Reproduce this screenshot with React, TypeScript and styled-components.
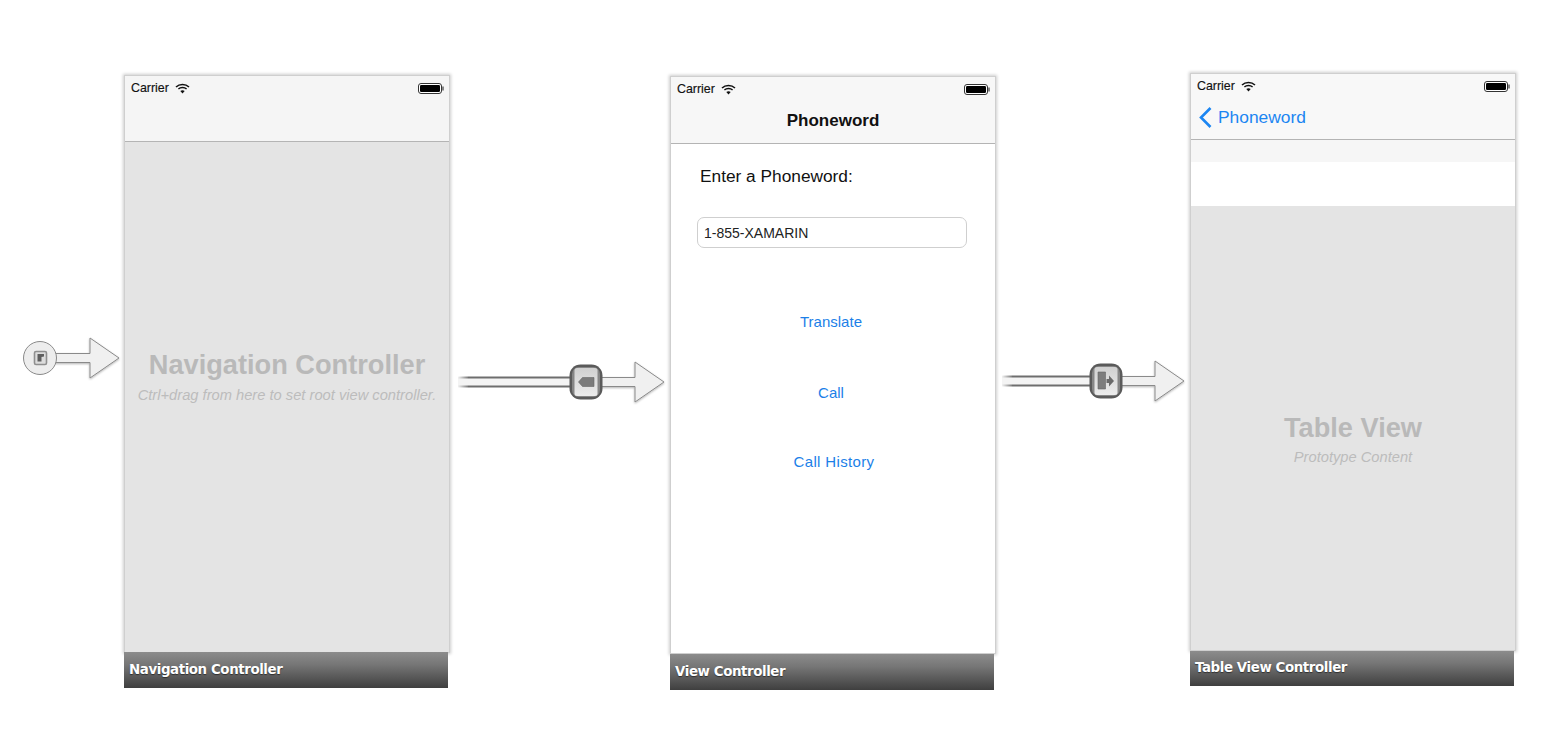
import React from "react";
import styled, { createGlobalStyle } from "styled-components";

const Global = createGlobalStyle`
  html, body { margin: 0; padding: 0; background: #fff; }
  body { font-family: "Liberation Sans", Arial, sans-serif; }
`;

const Canvas = styled.div`
  position: relative;
  width: 1556px;
  height: 752px;
  overflow: hidden;
  background: #fff;
`;

const SceneWrap = styled.section<{ $x: number; $y: number }>`
  position: absolute;
  left: ${(p) => p.$x}px;
  top: ${(p) => p.$y}px;
  width: 326px;
  display: flex;
  flex-direction: column;
`;

const Screen = styled.div`
  width: 324px;
  height: 576px;
  margin-left: 1px;
  display: flex;
  flex-direction: column;
  background: #fff;
  box-shadow: 0 0 0 1px #cfcfcf, 0 0 3px 2px rgba(0, 0, 0, 0.2);
`;

const Head = styled.header<{ $h: number; $bg: string }>`
  height: ${(p) => p.$h}px;
  flex: none;
  background: ${(p) => p.$bg};
  border-bottom: 1px solid #b4b4b4;
  display: flex;
  flex-direction: column;
`;

const StatusBar = styled.div`
  height: 24px;
  flex: none;
  padding: 0 5px 0 6px;
  display: flex;
  align-items: center;
  font-size: 12.4px;
  color: #111;
  -webkit-text-stroke: 0.15px #111;
`;

const Carrier = styled.span`
  margin-right: 6px;
`;

const Spacer = styled.span`
  flex: 1;
`;

const NavRow = styled.div`
  flex: 1;
  display: flex;
  align-items: center;
  padding-bottom: 2px;
`;

const NavTitle = styled.div`
  flex: 1;
  text-align: center;
  font-size: 17px;
  font-weight: 700;
  color: #111;
`;

const BackLink = styled.div`
  display: flex;
  align-items: center;
  padding-left: 8px;
  gap: 6px;
  font-size: 17.4px;
  color: #1c86f2;
`;

const GrayBody = styled.div<{ $top: number }>`
  flex: 1;
  background: #e4e4e4;
  display: flex;
  flex-direction: column;
  align-items: center;
  padding-top: ${(p) => p.$top}px;
`;

const BigHint = styled.div`
  font-size: 27.2px;
  font-weight: 700;
  line-height: 32px;
  color: #b9b9b9;
`;

const SmallHint = styled.div<{ $mt: number }>`
  font-size: 14.7px;
  font-style: italic;
  line-height: 16px;
  margin-top: ${(p) => p.$mt}px;
  color: #bcbcbc;
`;

const ViewBody = styled.div`
  flex: 1;
  display: flex;
  flex-direction: column;
  padding: 22px 28px 0 26px;
`;

const Prompt = styled.div`
  font-size: 17.3px;
  line-height: 20px;
  color: #111;
  padding-left: 3px;
`;

const Field = styled.div`
  box-sizing: border-box;
  height: 31px;
  margin-top: 31px;
  border: 1px solid #cfcfcf;
  border-radius: 7px;
  padding: 1px 0 0 6px;
  display: flex;
  align-items: center;
  font-size: 14px;
  color: #222;
`;

const Action = styled.div<{ $mt: number; $shift: number; $track?: number }>`
  margin-top: ${(p) => p.$mt}px;
  margin-left: -2px;
  padding-left: ${(p) => p.$shift}px;
  text-align: center;
  font-size: 15px;
  line-height: 18px;
  letter-spacing: ${(p) => p.$track ?? 0}px;
  color: #1c7fe8;
`;

const TableBand = styled.div`
  height: 22px;
  flex: none;
  background: #f6f6f6;
`;

const TableRow = styled.div`
  height: 44px;
  flex: none;
  background: #fff;
`;

const Caption = styled.div<{ $gap: number; $pad: number; $h: number }>`
  width: 324px;
  height: ${(p) => p.$h}px;
  margin-top: ${(p) => p.$gap}px;
  box-sizing: border-box;
  padding: ${(p) => p.$pad}px 0 0 5px;
  background: linear-gradient(#8c8c8c, #767676 35%, #3f3f3f);
  color: #fff;
  font-family: "DejaVu Sans", sans-serif;
  font-size: 13.4px;
  font-weight: 700;
  line-height: 20px;
  letter-spacing: -0.42px;
  text-shadow: 0 1px 1px rgba(0, 0, 0, 0.5);
`;

const Drawing = styled.svg`
  position: absolute;
  left: 0;
  top: 0;
  pointer-events: none;
`;

const Wifi = () => (
  <svg width="15" height="11" viewBox="0 0 15 11" fill="none" stroke="#111">
    <path d="M1 4 C4.5 0.6 10.5 0.6 14 4" strokeWidth="1.5" />
    <path d="M3.4 6 C5.6 4 9.4 4 11.6 6" strokeWidth="1.5" />
    <path d="M7.5 10.4 L5.3 7.9 C6.6 7 8.4 7 9.7 7.9 Z" fill="#111" stroke="none" />
  </svg>
);

const Battery = () => (
  <svg width="26" height="11" viewBox="0 0 26 11">
    <rect x="0.5" y="0.5" width="23" height="10" rx="2.5" fill="#fff" stroke="#333" />
    <rect x="2" y="2" width="20" height="7" rx="1.2" fill="#000" />
    <rect x="24.3" y="3.5" width="1.4" height="4" fill="#555" />
  </svg>
);

const Status = () => (
  <StatusBar>
    <Carrier>Carrier</Carrier>
    <Wifi />
    <Spacer />
    <Battery />
  </StatusBar>
);

const Chevron = () => (
  <svg width="13" height="21" viewBox="0 0 13 21" fill="none" stroke="#1c86f2" strokeWidth="2.6">
    <path d="M11.5 1 L2 10.5 L11.5 20" />
  </svg>
);

const EntryArrow = () => (
  <g>
    <path
      d="M52 353.5 H90 V338 L119 358 L90 378 V362.5 H52 Z"
      fill="#f0f0f0"
      stroke="#8a8a8a"
      filter="url(#arrowShadow)"
    />
    <circle cx="40" cy="358" r="16.5" fill="#ededed" stroke="#8a8a8a" />
    <rect x="34.5" y="351.5" width="12" height="13" rx="1.5" fill="#dcdcdc" stroke="#8f8f8f" strokeWidth="1.6" />
    <path d="M37.5 354 H44 V356.6 L41.5 357 V361.5 H37.5 Z" fill="#5e5e5e" />
  </g>
);

const SegueArrow = ({
  startX,
  iconX,
  headX,
  cy,
  children,
}: {
  startX: number;
  iconX: number;
  headX: number;
  cy: number;
  children: React.ReactNode;
}) => (
  <g>
    <rect x={startX} y={cy - 4.5} width={iconX - startX} height="9" fill="#f4f4f4" />
    <rect x={startX + 10} y={cy - 5.5} width={iconX - startX - 10} height="2" fill="#6e6e6e" />
    <rect x={startX + 10} y={cy + 3.5} width={iconX - startX - 10} height="2" fill="#6e6e6e" />
    <rect x={startX} y={cy - 5.5} width="10" height="2" fill="url(#fade)" />
    <rect x={startX} y={cy + 3.5} width="10" height="2" fill="url(#fade)" />
    <path
      d={`M${iconX} ${cy - 4.5} H${headX} V${cy - 20} L${headX + 29} ${cy} L${headX} ${cy + 20} V${cy + 4.5} H${iconX} Z`}
      fill="#f0f0f0"
      stroke="#8a8a8a"
      filter="url(#arrowShadow)"
    />
    <rect x={iconX - 16.5} y={cy - 17.5} width="33" height="35" rx="11" fill="#5a5a5a" />
    <rect x={iconX - 14} y={cy - 15} width="28" height="30" rx="7" fill="#868686" />
    <rect x={iconX - 11.5} y={cy - 14} width="23" height="28" rx="2.5" fill="url(#badge)" />
    {children}
  </g>
);

const Connections = () => (
  <Drawing width="1556" height="752" viewBox="0 0 1556 752">
    <defs>
      <filter id="arrowShadow" x="-10%" y="-20%" width="120%" height="150%">
        <feDropShadow dx="0" dy="1" stdDeviation="1.2" floodColor="#000" floodOpacity="0.3" />
      </filter>
      <linearGradient id="fade" x1="0" x2="1" y1="0" y2="0">
        <stop offset="0" stopColor="#6e6e6e" stopOpacity="0.05" />
        <stop offset="1" stopColor="#6e6e6e" stopOpacity="0.9" />
      </linearGradient>
      <linearGradient id="badge" x1="0" x2="0" y1="0" y2="1">
        <stop offset="0" stopColor="#d0d0d0" />
        <stop offset="1" stopColor="#ececec" />
      </linearGradient>
    </defs>
    <EntryArrow />

    <SegueArrow startX={458} iconX={586} headX={635} cy={382}>
      <path d="M578.5 382 L582.5 377.5 H594 V386.5 H582.5 Z" fill="#7b7b7b" stroke="#666" strokeWidth="0.6" />
    </SegueArrow>

    <SegueArrow startX={1002} iconX={1106} headX={1155} cy={381}>
      <path d="M1098 372 H1105.5 V389 H1098 Z" fill="#7d7d7d" stroke="#666" strokeWidth="0.6" />
      <path d="M1106.5 379 H1109 V375.5 L1114 381 L1109 386.5 V383 H1106.5 Z" fill="#6a6a6a" />
    </SegueArrow>
  </Drawing>
);

export default function App() {
  return (
    <Canvas>
      <Global />
      <SceneWrap $x={124} $y={76}>
        <Screen>
          <Head $h={65} $bg="#f5f5f5">
            <Status />
          </Head>
          <GrayBody $top={207}>
            <BigHint>Navigation Controller</BigHint>
            <SmallHint $mt={6}>Ctrl+drag from here to set root view controller.</SmallHint>
          </GrayBody>
        </Screen>
        <Caption $gap={0} $pad={8} $h={36}>Navigation Controller</Caption>
      </SceneWrap>

      <SceneWrap $x={670} $y={77}>
        <Screen>
          <Head $h={66} $bg="#f7f7f7">
            <Status />
            <NavRow>
              <NavTitle>Phoneword</NavTitle>
            </NavRow>
          </Head>
          <ViewBody>
            <Prompt>Enter a Phoneword:</Prompt>
            <Field>1-855-XAMARIN</Field>
            <Action $mt={65} $shift={0}>Translate</Action>
            <Action $mt={53} $shift={0}>Call</Action>
            <Action $mt={51} $shift={6} $track={0.35}>Call History</Action>
          </ViewBody>
        </Screen>
        <Caption $gap={1} $pad={8} $h={36}>View Controller</Caption>
      </SceneWrap>

      <SceneWrap $x={1190} $y={74}>
        <Screen>
          <Head $h={65} $bg="#f8f8f8">
            <Status />
            <NavRow>
              <BackLink>
                <Chevron />
                Phoneword
              </BackLink>
            </NavRow>
          </Head>
          <TableBand />
          <TableRow />
          <GrayBody $top={206}>
            <BigHint>Table View</BigHint>
            <SmallHint $mt={5}>Prototype Content</SmallHint>
          </GrayBody>
        </Screen>
        <Caption $gap={1} $pad={7} $h={35}>Table View Controller</Caption>
      </SceneWrap>

      <Connections />
    </Canvas>
  );
}
